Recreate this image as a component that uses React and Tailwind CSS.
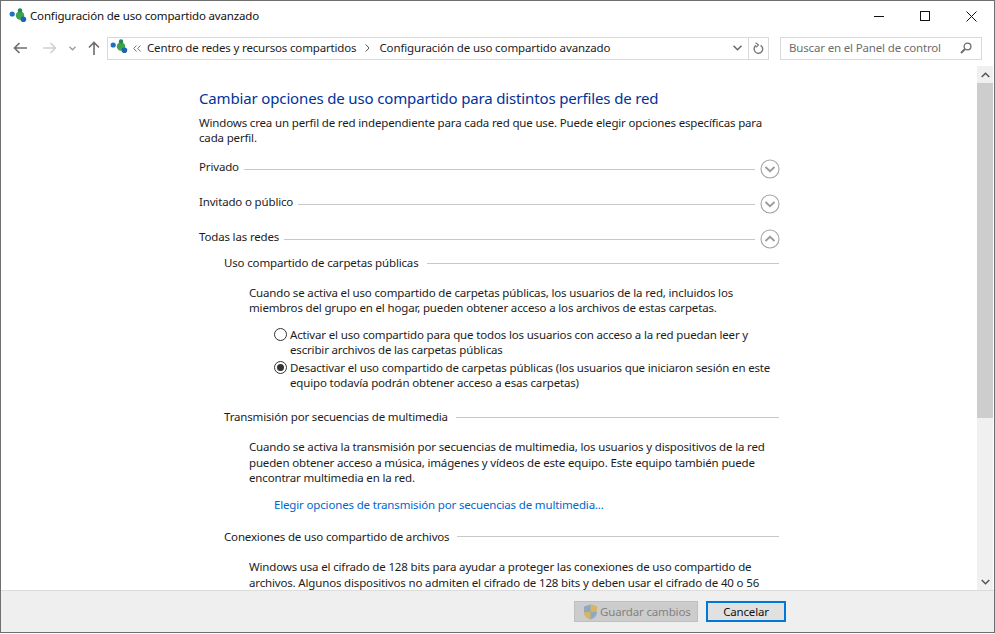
const NetIcon = ({ className }) => (
  <svg className={className} width="18" height="16" viewBox="0 0 18 16">
    <circle cx="3.2" cy="6" r="2.6" fill="#1f6fc4" />
    <circle cx="11" cy="7.5" r="4.2" fill="#3fa34d" />
    <circle cx="11" cy="2.4" r="2.2" fill="#1e8a52" />
    <circle cx="14.4" cy="11.2" r="2.8" fill="#1c63b5" />
  </svg>
);

const Chevron = ({ up }) => (
  <svg width="20" height="20" viewBox="0 0 20 20" className="shrink-0" fill="none">
    <circle cx="10" cy="10" r="9" stroke="#a3a3a3" strokeWidth="1.1" />
    <path d={up ? "M5.5 12 L10 7.8 L14.5 12" : "M5.5 8 L10 12.2 L14.5 8"} stroke="#9a9a9a" strokeWidth="1.8" />
  </svg>
);

const Section = ({ label, up, mt }) => (
  <div className={`flex items-center h-5 w-[581px] ${mt}`}>
    <span className="text-[#1c1c1c] mb-[4px]">{label}</span>
    <span className="flex-1 h-px bg-[#c8c8c8] ml-[5px] mr-[5px]"></span>
    <Chevron up={up} />
  </div>
);

const Sub = ({ label, mt }) => (
  <div className={`flex items-center h-4 w-[555px] ml-[25px] ${mt}`}>
    <span className="text-[#1c1c1c]">{label}</span>
    <span className="flex-1 h-px bg-[#c8c8c8] ml-[8px]"></span>
  </div>
);

const Radio = ({ on, mt, children }) => (
  <div className={`flex ml-[75px] ${mt}`}>
    <span className="w-[13px] h-[13px] rounded-full border border-[#333] mt-[1px] mr-[3px] flex items-center justify-center shrink-0">
      {on && <span className="w-[7px] h-[7px] rounded-full bg-[#333]"></span>}
    </span>
    <div className="leading-[15px] whitespace-nowrap">{children}</div>
  </div>
);

export default function App() {
  return (
    <div className="w-[995px] h-[634px] bg-white overflow-hidden flex flex-col text-[11.5px] text-[#1c1c1c] [font-family:'Noto_Sans',sans-serif] tracking-[-0.16px]">
      <div className="flex-1 flex flex-col min-h-0 border border-[#6f6f6f] mb-px">
        <div className="h-[30px] flex items-center pl-[8px] shrink-0">
          <NetIcon className="mr-[3px] -mt-[1px]" />
          <span className="text-[#111]">Configuración de uso compartido avanzado</span>
          <div className="ml-auto flex items-center h-full">
            <div className="w-[46px] flex justify-center"><span className="w-[10px] h-px bg-[#111]"></span></div>
            <div className="w-[46px] flex justify-center"><span className="w-[10px] h-[10px] border border-[#111]"></span></div>
            <div className="w-[46px] flex justify-center">
              <svg width="11" height="11" viewBox="0 0 11 11" stroke="#111" strokeWidth="1"><path d="M0.5 0.5 L10.5 10.5 M10.5 0.5 L0.5 10.5" /></svg>
            </div>
          </div>
        </div>
        <div className="h-[34px] flex items-center shrink-0">
          <div className="flex items-center w-[106px] pl-[12px]">
            <svg width="14" height="12" viewBox="0 0 14 12" fill="none" stroke="#6d6d6d" strokeWidth="1.6"><path d="M14 6 H1.5 M6.5 1 L1.5 6 L6.5 11" /></svg>
            <svg className="ml-[16px]" width="14" height="12" viewBox="0 0 14 12" fill="none" stroke="#d0d0d0" strokeWidth="1.6"><path d="M0 6 H12.5 M7.5 1 L12.5 6 L7.5 11" /></svg>
            <svg className="ml-[12px]" width="7" height="5" viewBox="0 0 7 5" fill="none" stroke="#9a9a9a" strokeWidth="1.3"><path d="M0.5 0.8 L3.5 3.8 L6.5 0.8" /></svg>
            <svg className="ml-[12px]" width="12" height="14" viewBox="0 0 12 14" fill="none" stroke="#6d6d6d" strokeWidth="1.6"><path d="M6 14 V1.5 M1 6.5 L6 1.5 L11 6.5" /></svg>
          </div>
          <div className="w-[662px] h-[23px] border border-[#d9d9d9] flex items-center pl-[2px]">
            <NetIcon className="-mt-[3px]" />
            <svg className="ml-[5px]" width="8" height="7" viewBox="0 0 8 7" fill="none" stroke="#777" strokeWidth="1"><path d="M3.5 0.5 L0.7 3.5 L3.5 6.5 M7.5 0.5 L4.7 3.5 L7.5 6.5" /></svg>
            <span className="ml-[6px]">Centro de redes y recursos compartidos</span>
            <svg className="ml-[9px]" width="5" height="8" viewBox="0 0 5 8" fill="none" stroke="#555" strokeWidth="1"><path d="M0.7 0.5 L4 4 L0.7 7.5" /></svg>
            <span className="ml-[9px] tracking-[-0.11px]">Configuración de uso compartido avanzado</span>
            <div className="ml-auto flex items-center h-full">
              <svg className="mr-[6px]" width="9" height="6" viewBox="0 0 9 6" fill="none" stroke="#666" strokeWidth="1.5"><path d="M0.5 0.7 L4.5 4.7 L8.5 0.7" /></svg>
              <div className="w-[20px] h-full border-l border-[#d9d9d9] flex items-center justify-center">
                <svg width="11" height="13" viewBox="0 0 11 13" fill="none" stroke="#777" strokeWidth="1.4"><path d="M7.6 3.3 A4.3 4.3 0 1 1 3 3.4" /><path d="M2.6 0.8 L5.5 3 L3 5.4" strokeWidth="1.1" /></svg>
              </div>
            </div>
          </div>
          <div className="w-[202px] h-[23px] ml-[11px] border border-[#d9d9d9] flex items-center pl-[8px] pr-[9px] justify-between text-[#6d6d6d]">
            <span>Buscar en el Panel de control</span>
            <svg width="12" height="12" viewBox="0 0 12 12" fill="none" stroke="#6d6d6d"><circle cx="7.5" cy="4.5" r="3.4" strokeWidth="1.3" /><path d="M5 7 L1 11" strokeWidth="2" /></svg>
          </div>
        </div>
        <div className="flex-1 flex min-h-0">
          <div className="flex-1 min-w-0 overflow-hidden pl-[198px] pt-[23px]">
            <div className="text-[15px] leading-[20px] text-[#003399] tracking-[-0.15px] whitespace-nowrap">Cambiar opciones de uso compartido para distintos perfiles de red</div>
            <div className="mt-[7px] leading-[15px] whitespace-nowrap">
              Windows crea un perfil de red independiente para cada red que use. Puede elegir opciones específicas para<br />cada perfil.
            </div>
            <Section label="Privado" mt="mt-[14px]" />
            <Section label="Invitado o público" mt="mt-[15px]" />
            <Section label="Todas las redes" up mt="mt-[15px]" />
            <Sub label="Uso compartido de carpetas públicas" mt="mt-[6px]" />
            <div className="ml-[50px] mt-[14px] leading-[15px] whitespace-nowrap">
              Cuando se activa el uso compartido de carpetas públicas, los usuarios de la red, incluidos los<br />miembros del grupo en el hogar, pueden obtener acceso a los archivos de estas carpetas.
            </div>
            <Radio mt="mt-[12px]">Activar el uso compartido para que todos los usuarios con acceso a la red puedan leer y<br />escribir archivos de las carpetas públicas</Radio>
            <Radio on mt="mt-[3px]">Desactivar el uso compartido de carpetas públicas (los usuarios que iniciaron sesión en este<br />equipo todavía podrán obtener acceso a esas carpetas)</Radio>
            <Sub label="Transmisión por secuencias de multimedia" mt="mt-[19px]" />
            <div className="ml-[50px] mt-[14px] leading-[15.5px] whitespace-nowrap">
              Cuando se activa la transmisión por secuencias de multimedia, los usuarios y dispositivos de la red<br />pueden obtener acceso a música, imágenes y vídeos de este equipo. Este equipo también puede<br />encontrar multimedia en la red.
            </div>
            <div className="ml-[75px] mt-[11px] text-[#0066cc] leading-[16px] whitespace-nowrap">Elegir opciones de transmisión por secuencias de multimedia...</div>
            <Sub label="Conexiones de uso compartido de archivos" mt="mt-[16px]" />
            <div className="ml-[50px] mt-[14px] leading-[16px] whitespace-nowrap">
              Windows usa el cifrado de 128 bits para ayudar a proteger las conexiones de uso compartido de<br />archivos. Algunos dispositivos no admiten el cifrado de 128 bits y deben usar el cifrado de 40 o 56
            </div>
          </div>
          <div className="w-[16px] mr-px shrink-0 bg-[#f0f0f0] flex flex-col items-center mt-[1px]">
            <div className="h-[17px] flex items-center">
              <svg width="9" height="6" viewBox="0 0 9 6" fill="none" stroke="#555" strokeWidth="1.5"><path d="M0.7 5 L4.5 1.2 L8.3 5" /></svg>
            </div>
            <div className="w-full h-[335px] bg-[#cdcdcd]"></div>
            <div className="flex-1"></div>
            <div className="h-[17px] flex items-center">
              <svg width="9" height="6" viewBox="0 0 9 6" fill="none" stroke="#555" strokeWidth="1.5"><path d="M0.7 1 L4.5 4.8 L8.3 1" /></svg>
            </div>
          </div>
        </div>
        <div className="h-[42px] shrink-0 bg-[#efefef] border-t border-[#dcdcdc] flex items-center justify-end pr-[208px]">
          <div className="w-[124px] h-[21px] bg-[#cccccc] border border-[#bfbfbf] flex items-center pl-[8px] text-[#838383] whitespace-nowrap">
            <svg className="mr-[2px] shrink-0" width="15" height="16" viewBox="0 0 15 16">
              <path d="M7.5 0.5 L14 2.5 V8 C14 12 10.5 14.5 7.5 15.5 C4.5 14.5 1 12 1 8 V2.5 Z" fill="#8fa9c4" />
              <path d="M7.5 0.5 L14 2.5 V8 H7.5 Z" fill="#d8b563" />
              <path d="M1 8 H7.5 V15.5 C4.5 14.5 1 12 1 8 Z" fill="#d8b563" />
            </svg>
            Guardar cambios
          </div>
          <div className="w-[80px] h-[21px] ml-[8px] bg-[#e1e1e1] border-2 border-[#0078d7] flex items-center justify-center text-[#111]">Cancelar</div>
        </div>
      </div>
    </div>
  );
}
